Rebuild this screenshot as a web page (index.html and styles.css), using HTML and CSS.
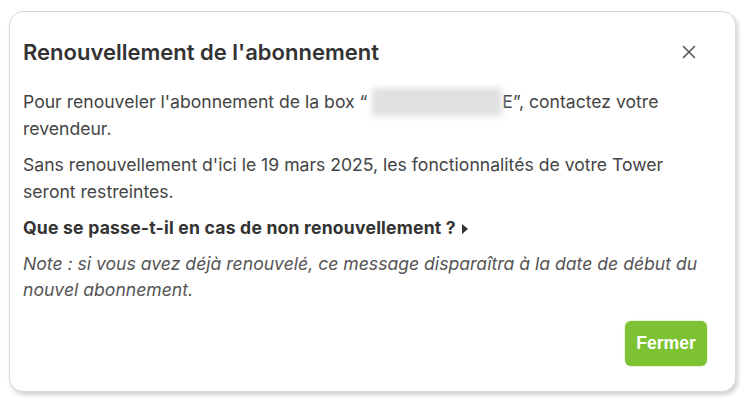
FILE: index.html
```html
<!DOCTYPE html>
<html lang="fr">
<head>
<meta charset="utf-8">
<link rel="stylesheet" href="styles.css">
</head>
<body>
<div class="modal">
  <div class="modal-header">
    <h2 class="modal-title">Renouvellement de l'abonnement</h2>
    <button class="close" aria-label="Fermer">
      <svg width="14" height="14" viewBox="0 0 14 14"><path d="M1.5 1.5 L12.5 12.5 M12.5 1.5 L1.5 12.5" stroke="#555" stroke-width="1.6" fill="none" stroke-linecap="round"/></svg>
    </button>
  </div>
  <div class="modal-body">
    <p>Pour renouveler l'abonnement de la box “<span class="blur"></span>E”, contactez votre revendeur.</p>
    <p>Sans renouvellement d'ici le 19 mars 2025, les fonctionnalités de votre Tower seront restreintes.</p>
    <p class="toggle">Que se passe-t-il en cas de non renouvellement ?<span class="caret"></span></p>
    <p class="note">Note : si vous avez déjà renouvelé, ce message disparaîtra à la date de début du nouvel abonnement.</p>
  </div>
  <div class="modal-footer">
    <button class="btn">Fermer</button>
  </div>
</div>
</body>
</html>
```

FILE: styles.css
```css
* { box-sizing: border-box; }
html, body { margin: 0; background: #fff; }
body { padding: 11px 11px 10px 9px; font-family: Inter, "Liberation Sans", sans-serif; color: #444; }
.modal {
  width: 727px;
  height: 381px;
  border: 1px solid #d9d9d9;
  border-radius: 14px;
  box-shadow: 2px 3px 4px rgba(0,0,0,0.18);
  background: #fff;
  display: flex;
  flex-direction: column;
}
.modal-header {
  display: flex;
  align-items: center;
  justify-content: space-between;
  padding: 26px 39px 0 13px;
}
.modal-title {
  margin: 0;
  font-size: 22px;
  line-height: 28px;
  font-weight: 600;
  color: #333;
}
.close {
  border: 0;
  background: none;
  padding: 0;
  width: 14px;
  height: 14px;
  display: flex;
}
.modal-body {
  padding: 22px 20px 0 13px;
  font-size: 17.6px;
  line-height: 26.5px;
}
.modal-body p { margin: 0 0 9.5px; }
.blur {
  display: inline-block;
  width: 130px;
  height: 28px;
  margin-left: 5px;
  vertical-align: -8px;
  background: #e0e0e0;
  filter: blur(3px);
}
.toggle { font-weight: 700; color: #333; letter-spacing: 0.2px; }
.caret {
  display: inline-block;
  width: 0; height: 0;
  margin-left: 6px;
  border-left: 6px solid #333;
  border-top: 5px solid transparent;
  border-bottom: 5px solid transparent;
  vertical-align: 0;
}
.note { font-style: italic; color: #555; }
.modal-footer {
  margin-top: auto;
  display: flex;
  justify-content: flex-end;
  padding: 0 28px 25px 0;
}
.btn {
  background: #7cc232;
  color: #fff;
  border: 0;
  border-radius: 6px;
  font-family: "Liberation Sans", Arial, sans-serif;
  font-weight: 700;
  font-size: 17.6px;
  width: 82px;
  height: 45px;
  box-shadow: 0 0 2px rgba(120,190,50,0.5);
}
```
